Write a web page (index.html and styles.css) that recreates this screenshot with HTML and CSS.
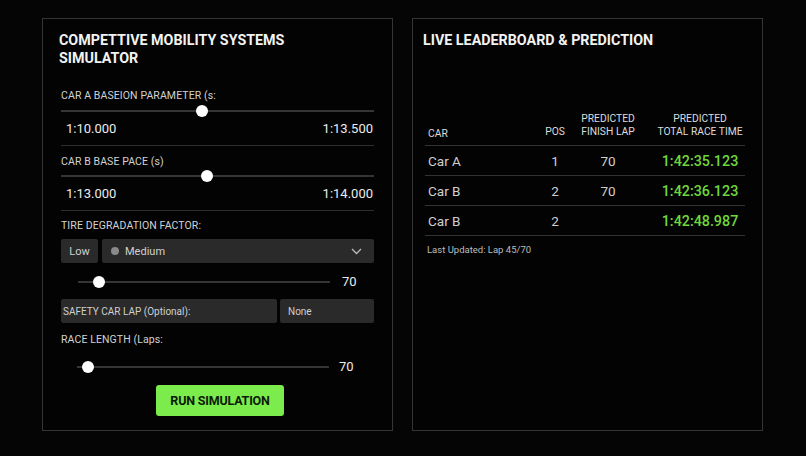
FILE: index.html
```html
<!DOCTYPE html>
<html>
<head>
<meta charset="utf-8" />
<title>Competitive Mobility Systems Simulator</title>
<link rel="stylesheet" href="styles.css">
</head>
<body>
	<div id="wrap">
		<div class="panel sim">
			<h2 class="title">COMPETTIVE MOBILITY SYSTEMS<br />SIMULATOR</h2>

			<div class="group">
				<p class="label">CAR A BASEION PARAMETER (s:</p>
				<div class="slider"><span class="thumb" style="left:45%"></span></div>
				<div class="range"><span>1:10.000</span><span>1:13.500</span></div>
			</div>

			<div class="group second">
				<p class="label">CAR B BASE PACE (s)</p>
				<div class="slider"><span class="thumb" style="left:46.5%"></span></div>
				<div class="range"><span>1:13.000</span><span>1:14.000</span></div>
			</div>

			<p class="label tire">TIRE DEGRADATION FACTOR:</p>
			<div class="select">
				<span class="box low">Low</span>
				<span class="box medium">
					<i class="dot"></i>Medium
					<svg class="chev" width="11" height="7" viewBox="0 0 11 7"><path d="M1 1l4.5 4.5L10 1" fill="none" stroke="#bbb" stroke-width="1.3"/></svg>
				</span>
			</div>
			<div class="valSlider deg">
				<div class="slider"><span class="thumb" style="left:8.5%"></span></div>
				<span class="val">70</span>
			</div>

			<div class="safety">
				<span class="box key">SAFETY CAR LAP (Optional):</span>
				<span class="box none">None</span>
			</div>

			<p class="label race">RACE LENGTH (Laps:</p>
			<div class="valSlider laps">
				<div class="slider"><span class="thumb" style="left:4.5%"></span></div>
				<span class="val">70</span>
			</div>

			<div class="btnRow"><button class="run">RUN SIMULATION</button></div>
		</div>

		<div class="panel board">
			<h2 class="title">LIVE LEADERBOARD &amp; PREDICTION</h2>
			<table class="lb">
				<colgroup><col class="cCar" /><col class="cPos" /><col class="cLap" /><col class="cTime" /></colgroup>
				<thead>
					<tr><th class="car">CAR</th><th>POS</th><th class="lap">PREDICTED<br />FINISH LAP</th><th>PREDICTED<br />TOTAL RACE TIME</th></tr>
				</thead>
				<tbody>
					<tr><td class="car">Car A</td><td>1</td><td class="lap">70</td><td class="time">1:42:35.123</td></tr>
					<tr><td class="car">Car B</td><td>2</td><td class="lap">70</td><td class="time">1:42:36.123</td></tr>
					<tr><td class="car">Car B</td><td>2</td><td class="lap"></td><td class="time">1:42:48.987</td></tr>
				</tbody>
			</table>
			<p class="updated">Last Updated: Lap 45/70</p>
		</div>
	</div>
</body>
</html>
```

FILE: styles.css
```css
body, div, p, h2, table, th, td{margin:0; padding:0;}
body{background:#050505; color:#e6e6e6; font-family:Roboto, "Liberation Sans", Arial, sans-serif;}

#wrap {display:flex; gap:19px; padding:18px 0 0 42px;}
.panel {width:349px; height:411px; border:1px solid #353535; background:#030303;}
.title {font-size:14.3px; line-height:18px; font-weight:bold; color:#f2f2f2; padding-top:12px;}

.sim {padding:0 18px 0 18px; width:313px;}
.sim .title {margin-left:-2px;}
.label {font-size:10.5px; line-height:14px; color:#d2d2d2; letter-spacing:0.1px;}

.group {border-bottom:1px solid #2e2e2e; padding-bottom:8px;}
.group .label {margin-top:22px;}
.group.second .label {margin-top:9px;}
.group .slider {margin-top:2px;}
.group.second .slider {margin-top:1px;}
.range {display:flex; justify-content:space-between; font-size:13px; line-height:16px; padding:4px 1px 0 5px; color:#ececec;}

.slider {position:relative; height:12px;}
.slider:before {content:''; position:absolute; left:0; right:0; top:5px; height:2px; background:#353535;}
.thumb {position:absolute; top:0; width:12px; height:12px; margin-left:-6px; border-radius:50%; background:#fff;}

.tire {margin-top:8px;}
.select {display:flex; gap:4px; margin-top:6px; height:24px;}
.box {display:flex; align-items:center; background:#2a2a2a; border-radius:2px; font-size:11px; color:#d0d0d0;}
.low {width:37px; justify-content:center;}
.medium {flex:1; padding-left:9px;}
.dot {width:8px; height:8px; border-radius:50%; background:#8a8a8a; margin-right:6px;}
.chev {margin-left:auto; margin-right:12px;}

.valSlider {display:flex; align-items:center;}
.valSlider .slider {width:252px;}
.val {font-size:13px; color:#ececec;}
.deg {margin-top:11px; padding-left:17px;}
.deg .val {margin-left:12px;}
.laps {margin-top:12px; padding-left:16px;}
.laps .val {margin-left:10px;}

.safety {display:flex; gap:3px; margin-top:10px; height:24px;}
.safety .box {font-size:10px;}
.key {width:216px; padding-left:2px; box-sizing:border-box;}
.none {flex:1; padding-left:8px;}

.race {margin-top:10px;}
.btnRow {display:flex; justify-content:center; margin-top:11px; padding-left:5px;}
.run {width:128px; height:31px; border:0; border-radius:3px; background:#7bec4b; color:#0d1a08; font-family:Roboto, "Liberation Sans", sans-serif; font-size:12.5px; font-weight:bold; letter-spacing:-0.2px;}

.board {padding:0 18px 0 10px; width:321px;}
.lb {width:320px; margin:63px 0 0 2px; border-collapse:collapse; table-layout:fixed;}
.cCar {width:110px;}
.cPos {width:40px;}
.cLap {width:80px;}
.cTime {width:90px;}
.lb th {font-size:10.3px; line-height:13px; font-weight:normal; color:#dcdcdc; text-align:center; vertical-align:bottom; padding-bottom:7px; border-bottom:1px solid #333;}
.lb th.car {text-align:left; padding-left:3px; padding-bottom:5px;}
.lb th.lap, .lb td.lap {padding-right:14px;}
.lb td {height:29px; font-size:13.5px; color:#cfcfcf; text-align:center; border-bottom:1px solid #333;}
.lb td.car {text-align:left; padding-left:3px;}
.lb td.time {font-size:14.3px; color:#6fd63c; font-weight:500;}
.updated {font-size:9.5px; color:#bdbdbd; margin:8px 0 0 4px;}
```
